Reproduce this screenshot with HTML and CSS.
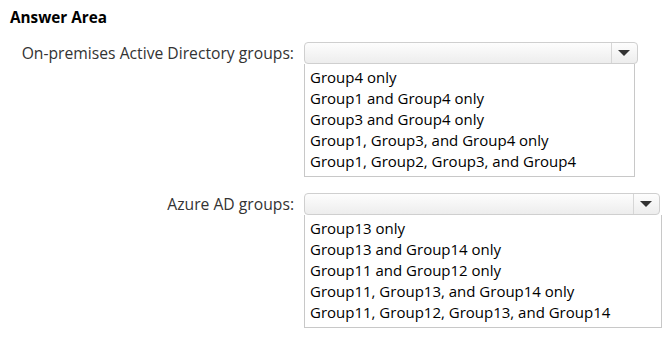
FILE: index.html
```html
<!DOCTYPE html>
<html lang="en">
<head>
  <meta charset="UTF-8">
  <title>Answer Area</title>
  <link rel="stylesheet" href="styles.css">
</head>
<body>
  <h1 class="title">Answer Area</h1>
  <div class="answers">
    <div class="answer-row">
      <div class="label">On-premises Active Directory groups:</div>
      <div class="picker picker-onprem">
        <div class="select">
          <span class="select-value"></span>
          <span class="select-arrow"></span>
        </div>
        <ul class="options">
          <li>Group4 only</li>
          <li>Group1 and Group4 only</li>
          <li>Group3 and Group4 only</li>
          <li>Group1, Group3, and Group4 only</li>
          <li>Group1, Group2, Group3, and Group4</li>
        </ul>
      </div>
    </div>
    <div class="answer-row">
      <div class="label">Azure AD groups:</div>
      <div class="picker picker-azure">
        <div class="select">
          <span class="select-value"></span>
          <span class="select-arrow"></span>
        </div>
        <ul class="options">
          <li>Group13 only</li>
          <li>Group13 and Group14 only</li>
          <li>Group11 and Group12 only</li>
          <li>Group11, Group13, and Group14 only</li>
          <li>Group11, Group12, Group13, and Group14</li>
        </ul>
      </div>
    </div>
  </div>
</body>
</html>
```

FILE: styles.css
```css
body {
  font-family: "Segoe UI", "Open Sans", sans-serif;
  background: #fff;
  color: #000;
  margin: 0;
  padding: 8px 10px;
}
.title {
  font-size: 15.3px;
  font-weight: bold;
  margin: 0;
  line-height: 18px;
}
.answers {
  margin-top: 16px;
}
.answer-row {
  display: grid;
  grid-template-columns: 284px auto;
  column-gap: 10px;
  margin-bottom: 16px;
}
.label {
  text-align: right;
  font-size: 15.7px;
  color: #333;
  line-height: 22px;
}
.picker-onprem {
  width: 334px;
}
.picker-azure {
  width: 358px;
}
.select {
  display: flex;
  height: 20px;
  border: 1px solid #cfcfcf;
  border-radius: 4px;
  background: linear-gradient(#fdfdfd, #ededed);
}
.picker-azure .select {
  width: 354px;
}
.select-value {
  flex: 1;
}
.select-arrow {
  width: 25px;
  border-left: 1px solid #d6d6d6;
  position: relative;
}
.select-arrow::after {
  content: "";
  position: absolute;
  left: 6px;
  top: 7px;
  border-left: 6px solid transparent;
  border-right: 6px solid transparent;
  border-top: 6px solid #333;
}
.options {
  list-style: none;
  margin: 0;
  padding: 3px 5px 4px;
  border: 1px solid #c8c8c8;
  border-top: none;
  width: 319px;
}
.picker-azure .options {
  width: 346px;
}
.options li {
  font-size: 15px;
  line-height: 21px;
}
```
